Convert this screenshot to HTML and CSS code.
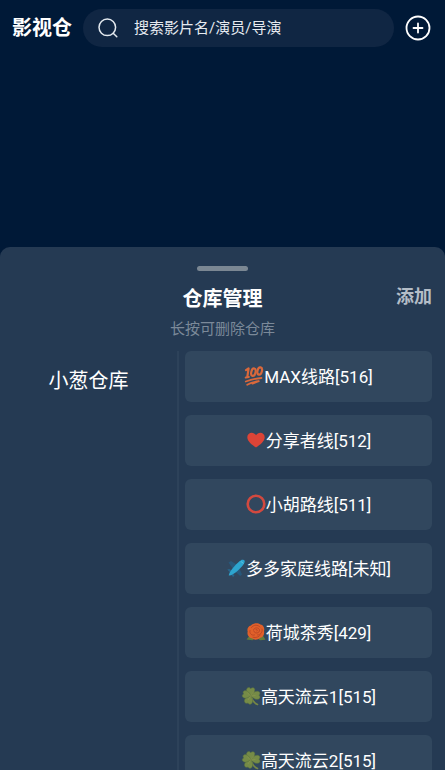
FILE: index.html
```html
<!DOCTYPE html>
<html lang="zh-CN">
<head>
<meta charset="utf-8">
<meta name="viewport" content="width=device-width, initial-scale=1">
<title>影视仓</title>
<link rel="stylesheet" href="styles.css">
</head>
<body>
<svg class="sprite" aria-hidden="true">
  <symbol id="clover" viewBox="0 0 20 20">
    <path d="M10 10c1 4 2.500 7 6.500 8.500" fill="none" stroke="#768745" stroke-width="1.600" stroke-linecap="round"/>
    <g fill="#768b47" stroke="#58703f" stroke-width=".5">
      <path d="M9.800 9.500C6 8.500 4.500 4.500 6 2.500 7 1 9 1.300 9.600 2.800 11 1 13.500 1.500 13.800 3.500 14 6 12 8.500 9.800 9.500Z"/>
      <path d="M10 9.800C11.500 6.500 15 4.500 17.500 5.500c1.800.8 1.800 2.800.3 3.700 1.700.8 1.700 3-.1 3.900C15 14 12 12.500 10 9.800Z"/>
      <path d="M9.800 10c2 2.500 2.500 6 .7 7.700-1.200 1-3 .6-3.400-.8-1.600 1-3.500.2-3.700-1.600C3.200 12.500 6.500 10.500 9.800 10Z"/>
      <path d="M9.500 9.800C6.500 12.500 3 12.800 1.600 11 .7 9.600 1.500 8.200 2.700 7.900 1.500 6.500 2.200 4.800 4 4.600 7 4.500 8.800 7 9.500 9.800Z"/>
    </g>
    <path d="M6.500 7l3 2.600 3.500-4M10 10l4.500-.5M9.500 10L7 14" fill="none" stroke="#8f9950" stroke-width=".6"/>
  </symbol>
</svg>
<header class="topbar">
  <h1 class="brand">影视仓</h1>
  <label class="search">
    <svg class="search-icon" viewBox="0 0 20 20" aria-hidden="true"><circle cx="9.300" cy="9.300" r="8.300"/><path d="M15.200 15.200l3.600 3.600"/></svg>
    <input class="search-input" type="search" placeholder="搜索影片名/演员/导演" aria-label="搜索">
  </label>
  <button class="plus" type="button" aria-label="添加">
    <svg viewBox="0 0 26 26" aria-hidden="true"><circle cx="13" cy="13" r="11.500"/><path d="M13 8.500v9M8.500 13h9"/></svg>
  </button>
</header>
<main class="sheet">
  <div class="handle"></div>
  <div class="sheet-head">
    <h2 class="sheet-title">仓库管理</h2>
    <button class="add" type="button">添加</button>
  </div>
  <p class="hint">长按可删除仓库</p>
  <div class="columns">
    <nav class="stores"><button class="store" type="button">小葱仓库</button></nav>
    <section class="lines">
      <button class="line" type="button"><svg class="emoji" viewBox="0 0 20 20" aria-hidden="true"><g fill="none" stroke="#d9683b" stroke-linecap="round" stroke-linejoin="round"><path d="M2 4.200L4.600 2.300 3.300 10.800M1.800 11.500l3-.5" stroke-width="2.200"/><ellipse cx="9.400" cy="6.200" rx="2.100" ry="3.800" transform="rotate(14 9.400 6.200)" stroke-width="2.200"/><ellipse cx="15.700" cy="5" rx="2.200" ry="3.700" transform="rotate(14 15.700 5)" stroke-width="2.200"/><path d="M1.800 15.500Q9 12.700 17.500 12M3.200 18.800Q8 16 14.800 15.200L8.500 17.600" stroke-width="1.800"/></g></svg>MAX线路[516]</button>
      <button class="line" type="button"><svg class="emoji" viewBox="0 0 20 20" aria-hidden="true"><path d="M10 17.500C6 14.800 1.300 11.200 1.300 7.200c0-5 6.400-6.200 8.700-1.900 2.300-4.300 8.700-3.100 8.700 1.900 0 4-4.700 7.600-8.700 10.300Z" fill="#dc4437"/></svg>分享者线[512]</button>
      <button class="line" type="button"><svg class="emoji" viewBox="0 0 20 20" aria-hidden="true"><circle cx="10" cy="10" r="8.300" fill="none" stroke="#d2493f" stroke-width="2.600"/></svg>小胡路线[511]</button>
      <button class="line" type="button"><svg class="emoji" viewBox="0 0 20 20" aria-hidden="true"><path d="M2.500 4.500L5 3l7 4.500L7 11ZM12.500 8.500l3.500 8-1.800 1.500L8.500 13Z" fill="#28587b"/><path d="M1.300 11.500l2-.6 3.500 2.400-2.500 1.500ZM6 14l2.500 3.800-1.500 1.300-2.700-3.600Z" fill="#28658b"/><path d="M2.800 17.600C2.500 14 12.500 3 16 1.800c2.200-.6 3.200.7 2.500 2.700C17 8.500 7.300 18 2.800 17.600Z" fill="#2da5cf"/><path d="M15 3.300l2.200 2.200" stroke="#65c5dc" stroke-width="1"/></svg>多多家庭线路[未知]</button>
      <button class="line" type="button"><svg class="emoji" viewBox="0 0 20 20" aria-hidden="true"><path d="M5 12l-4.500 5.500 6 .8L10 15l4 3.300 5.500-.6L16 12Z" fill="#647b3c"/><path d="M5 3.500C7 .8 12 .5 14.500 2.500c3 .5 4.500 4 3.500 6.500.8 3.500-1 6-3.500 6.800-3 2.500-7 2.200-8.500.5-3-.2-5.300-3.800-4.300-6.800C.8 7.500 2 4 5 3.500Z" fill="#e0602a"/><path d="M5.500 5.500c2-3 6.500-3 8.500-.5M4 8.500c-1 3 2 5.500 4.500 4.500M16 7c1 3-1.500 6-4.500 6M7.500 8.200c0-3 5.500-3.200 6-.2.300 3.500-5 4-5.500 1.500M10 7.500c1.500-.5 2 1 .8 1.500M7 15.300c3 .8 6-.3 7.500-2.500" fill="none" stroke="#b54324" stroke-width=".8" stroke-linecap="round"/></svg>荷城茶秀[429]</button>
      <button class="line" type="button"><svg class="emoji" aria-hidden="true"><use href="#clover"/></svg>高天流云1[515]</button>
      <button class="line" type="button"><svg class="emoji" aria-hidden="true"><use href="#clover"/></svg>高天流云2[515]</button>
    </section>
  </div>
</main>
</body>
</html>
```
FILE: styles.css
```css
* { box-sizing: border-box; }

body {
  margin: 0;
  height: 100vh;
  display: flex;
  flex-direction: column;
  overflow: hidden;
  background: #001937;
  color: #fff;
  font-family: Roboto, "Noto Sans CJK SC", sans-serif;
}

button {
  padding: 0;
  border: 0;
  background: none;
  color: inherit;
  font: inherit;
  cursor: pointer;
}

h1, h2, p { margin: 0; }

.sprite { display: none; }

.topbar {
  display: flex;
  align-items: center;
  gap: 11px;
  padding: 9px 13px 0 12px;
}

.brand {
  font-size: 20px;
  line-height: 24px;
  font-weight: 700;
}

.search {
  flex: 1;
  min-width: 0;
  height: 38px;
  display: flex;
  align-items: center;
  gap: 16px;
  padding: 0 15px;
  border-radius: 19px;
  background: #102643;
}

.search-icon {
  flex: none;
  width: 20px;
  height: 20px;
  fill: none;
  stroke: #e3e9ef;
  stroke-width: 1.5;
  stroke-linecap: round;
}

.search-input {
  flex: 1;
  min-width: 0;
  padding: 0;
  border: 0;
  outline: 0;
  background: none;
  color: #fff;
  font: inherit;
  font-size: 15px;
}

.search-input::placeholder { color: #e6eaf0; opacity: 1; }

.plus {
  width: 27px;
  height: 26px;
}

.plus svg {
  display: block;
  width: 26px;
  height: 26px;
  fill: none;
  stroke: #fff;
  stroke-width: 1.8;
  stroke-linecap: round;
}

.sheet {
  flex: 1;
  min-height: 0;
  display: flex;
  flex-direction: column;
  margin-top: 200px;
  padding: 19px 13px 0 0;
  border-radius: 10px 10px 0 0;
  background: #253a53;
}

.handle {
  flex: none;
  align-self: center;
  width: 51px;
  height: 5px;
  margin-left: 13px;
  border-radius: 3px;
  background: #7b8793;
}

.sheet-head {
  display: grid;
  grid-template-columns: 1fr auto 1fr;
  align-items: center;
  margin-top: 13px;
  padding-left: 13px;
}

.sheet-title {
  grid-column: 2;
  font-size: 20px;
  line-height: 30px;
  font-weight: 700;
}

.add {
  justify-self: end;
  color: #b4bdc7;
  font-size: 18px;
  line-height: 24px;
  padding-bottom: 4px;
  font-weight: 700;
}

.hint {
  margin-top: 5px;
  padding-left: 13px;
  text-align: center;
  color: #7b8999;
  font-size: 15px;
  line-height: 20px;
}

.columns {
  flex: 1;
  min-height: 0;
  display: grid;
  grid-template-columns: 179fr 253fr;
  margin-top: 12px;
}

.stores { border-right: 2px solid #2d425a; }

.store {
  display: block;
  width: 100%;
  height: 56px;
  font-size: 20px;
}

.lines {
  display: flex;
  flex-direction: column;
  gap: 13px;
  padding-left: 6px;
  overflow: hidden;
}

.line {
  flex: none;
  display: flex;
  align-items: center;
  justify-content: center;
  height: 51px;
  padding-bottom: 2px;
  border-radius: 6px;
  background: #31475e;
  font-size: 17px;
}

.emoji {
  flex: none;
  width: 20px;
  height: 20px;
}
```
